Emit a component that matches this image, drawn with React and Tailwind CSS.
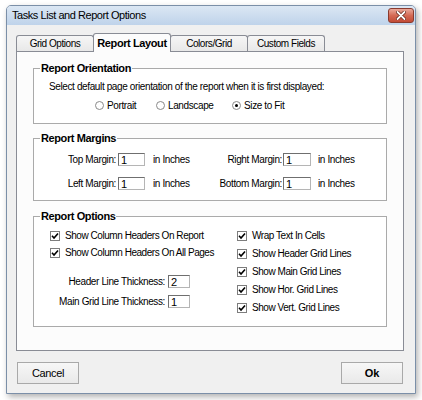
import React from "react";

function Check() {
  return (
    <span className="w-[10px] h-[10px] border border-[#7d7d7d] bg-white flex items-center justify-center shrink-0">
      <svg width="8" height="8" viewBox="0 0 8 8">
        <path d="M1 3.8 L3 6 L7 1.4" fill="none" stroke="#000" strokeWidth="1.6" />
      </svg>
    </span>
  );
}

function CheckRow({ label }) {
  return (
    <div className="flex items-center h-[12px]">
      <Check />
      <span className="ml-[5px] leading-[12px] tracking-[-0.45px]">{label}</span>
    </div>
  );
}

function Radio({ label, selected, w }) {
  return (
    <div className={"flex items-center " + w}>
      <span className="w-[9px] h-[9px] rounded-full border border-[#8a8a8a] bg-white flex items-center justify-center shrink-0">
        {selected && <span className="w-[3px] h-[3px] rounded-full bg-black" />}
      </span>
      <span className="ml-[3px]">{label}</span>
    </div>
  );
}

function Input({ value, w }) {
  return (
    <span
      className={
        "h-[13px] bg-white border border-[#b5b5b5] border-t-[#6f6f6f] border-l-[#6f6f6f] pl-[2px] leading-[12px] text-[11px] flex items-center shrink-0 " +
        w
      }
    >
      {value}
    </span>
  );
}

function Tab({ label, selected, first }) {
  if (selected) {
    return (
      <div className="w-[78px] h-[19px] -ml-[1px] -mb-[1px] relative z-10 bg-[#fcfcfc] border border-b-0 border-[#898c95] rounded-t-[3px] flex items-center justify-center font-bold text-[11px] tracking-[-0.4px]">
        {label}
      </div>
    );
  }
  return (
    <div
      className={
        "w-[78px] h-[16px] bg-gradient-to-b from-[#f6f6f6] to-[#e8e8e8] border border-b-0 border-[#898c95] rounded-t-[3px] flex items-center justify-center tracking-[-0.45px] " +
        (first ? "" : "-ml-[1px]")
      }
    >
      {label}
    </div>
  );
}

function Legend({ children }) {
  return (
    <legend className="ml-[6px] px-[1px] font-bold text-[11px] leading-[13px] tracking-[-0.4px]">
      {children}
    </legend>
  );
}

export default function App() {
  return (
    <div className="w-[422px] h-[400px] bg-white pl-[6px] pt-[5px] font-['Liberation_Sans',Arial,sans-serif] text-[10px] tracking-[-0.38px] text-black leading-[13px]">
      <div className="w-[410px] h-[389px] bg-[#f0f0f0] border border-[#7b8fa8] rounded-t-[5px] shadow-[2px_3px_6px_rgba(0,0,0,0.3)] flex flex-col">
        <div className="h-[19px] bg-gradient-to-b from-[#dbe7f4] to-[#bfd3ea] flex items-center justify-between pl-[5px] pr-[1px] rounded-t-[4px]">
          <span className="text-[11px] tracking-[-0.45px]">Tasks List and Report Options</span>
          <div className="w-[26px] h-[15px] rounded-[3px] border border-[#8a3b2e] bg-gradient-to-b from-[#e9a99b] via-[#d46a55] to-[#c24a35] flex items-center justify-center">
            <svg width="10" height="9" viewBox="0 0 10 9">
              <path d="M1.5 1 L8.5 8 M8.5 1 L1.5 8" stroke="#5b1d12" strokeWidth="3.2" strokeLinecap="round" />
              <path d="M1.5 1 L8.5 8 M8.5 1 L1.5 8" stroke="#fff" strokeWidth="1.8" strokeLinecap="round" />
            </svg>
          </div>
        </div>
        <div className="pl-[9px] pt-[8px]">
          <div className="flex items-end h-[18px]">
            <Tab label="Grid Options" first />
            <Tab label="Report Layout" selected />
            <Tab label="Colors/Grid" />
            <Tab label="Custom Fields" />
          </div>
          <div className="w-[388px] h-[300px] border border-[#898c95] bg-[#fcfcfc] pl-[16px] pr-[16px] pt-[10px]">
            <fieldset className="h-[62px] border border-[#aaaaaa] bg-white">
              <Legend>Report Orientation</Legend>
              <div className="pl-[15px] mt-[5px]">
                Select default page orientation of the report when it is first displayed:
              </div>
              <div className="flex items-center pl-[61px] mt-[6px] h-[13px]">
                <Radio label="Portrait" w="w-[61px]" />
                <Radio label="Landscape" w="w-[76px]" />
                <Radio label="Size to Fit" selected w="" />
              </div>
            </fieldset>
            <fieldset className="h-[69px] mt-[8px] border border-[#aaaaaa] bg-white">
              <Legend>Report Margins</Legend>
              <div className="flex flex-col gap-[11px] mt-[8px]">
                {[
                  ["Top Margin:", "Right Margin:"],
                  ["Left Margin:", "Bottom Margin:"],
                ].map(([a, b]) => (
                  <div key={a} className="flex items-center h-[13px]">
                    <span className="w-[82px] text-right">{a}</span>
                    <span className="ml-[2px]">
                      <Input value="1" w="w-[27px]" />
                    </span>
                    <span className="ml-[8px] w-[45px]">in Inches</span>
                    <span className="w-[84px] text-right">{b}</span>
                    <span className="ml-[1px]">
                      <Input value="1" w="w-[28px]" />
                    </span>
                    <span className="ml-[7px]">in Inches</span>
                  </div>
                ))}
              </div>
            </fieldset>
            <fieldset className="h-[117px] mt-[9px] border border-[#aaaaaa] bg-white">
              <Legend>Report Options</Legend>
              <div className="flex mt-[7px]">
                <div className="w-[203px] pl-[16px] flex flex-col">
                  <div className="flex flex-col gap-[5px]">
                    <CheckRow label="Show Column Headers On Report" />
                    <CheckRow label="Show Column Headers On All Pages" />
                  </div>
                  <div className="flex items-center h-[13px] mt-[16px]">
                    <span className="w-[115px] text-right">Header Line Thickness:</span>
                    <span className="ml-[3px]">
                      <Input value="2" w="w-[22px]" />
                    </span>
                  </div>
                  <div className="flex items-center h-[13px] mt-[7px]">
                    <span className="w-[115px] text-right">Main Grid Line Thickness:</span>
                    <span className="ml-[3px]">
                      <Input value="1" w="w-[22px]" />
                    </span>
                  </div>
                </div>
                <div className="flex flex-col gap-[6px]">
                  <CheckRow label="Wrap Text In Cells" />
                  <CheckRow label="Show Header Grid Lines" />
                  <CheckRow label="Show Main Grid Lines" />
                  <CheckRow label="Show Hor. Grid Lines" />
                  <CheckRow label="Show Vert. Grid Lines" />
                </div>
              </div>
            </fieldset>
          </div>
          <div className="w-[388px] flex justify-between mt-[11px]">
            <button className="ml-[1px] w-[62px] h-[22px] border border-[#a9a9a9] bg-gradient-to-b from-[#f7f7f7] to-[#e9e9e9] text-[11px] tracking-[-0.4px] flex items-center justify-center">
              Cancel
            </button>
            <button className="mr-[1px] w-[62px] h-[22px] border border-[#a9a9a9] bg-gradient-to-b from-[#f7f7f7] to-[#e9e9e9] text-[11px] font-bold tracking-[-0.2px] flex items-center justify-center">
              Ok
            </button>
          </div>
        </div>
      </div>
    </div>
  );
}
